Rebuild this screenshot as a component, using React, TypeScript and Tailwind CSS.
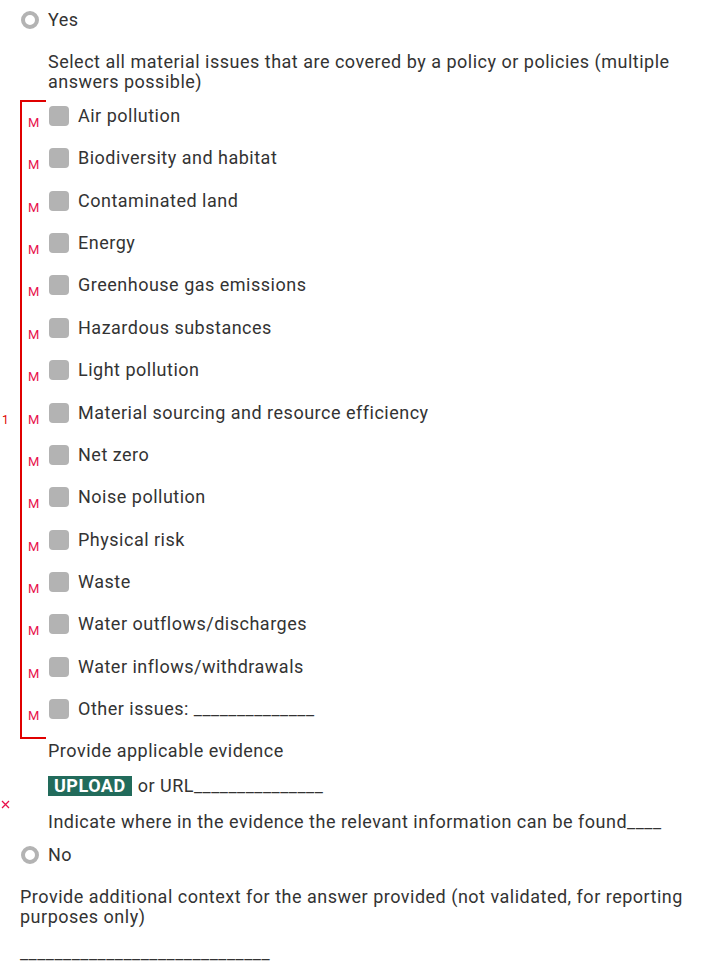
import React from "react";

const ISSUES = [
  "Air pollution",
  "Biodiversity and habitat",
  "Contaminated land",
  "Energy",
  "Greenhouse gas emissions",
  "Hazardous substances",
  "Light pollution",
  "Material sourcing and resource efficiency",
  "Net zero",
  "Noise pollution",
  "Physical risk",
  "Waste",
  "Water outflows/discharges",
  "Water inflows/withdrawals",
  "Other issues: ______________",
];

function Radio({ label }: { label: string }) {
  return (
    <div className="flex h-[20px] items-center pl-[21px]">
      <span className="h-[18px] w-[18px] rounded-full border-[4px] border-[#b3b3b3] bg-white" />
      <span className="ml-[9px] leading-[20px]">{label}</span>
    </div>
  );
}

function IssueRow({ label }: { label: string }) {
  return (
    <div className="flex h-[42.36px] items-start">
      <span className="w-[27px] pl-[6px] pt-[13px] text-[13px] leading-[16px] tracking-normal text-[#e8104a]">M</span>
      <div className="flex h-[28px] items-center">
        <span className="h-[20px] w-[20px] rounded-[4px] bg-[#b3b3b3]" />
        <span className="ml-[9px] leading-[20px]">{label}</span>
      </div>
    </div>
  );
}

export default function App() {
  return (
    <div className="min-h-[969px] w-[706px] bg-white font-['Roboto',sans-serif] text-[18px] tracking-[0.5px] text-[#333]">
      <div className="pt-[10px]">
        <Radio label="Yes" />
      </div>

      <p className="mt-[22px] w-[690px] pl-[48px] leading-[20px]">
        Select all material issues that are covered by a policy or policies (multiple answers possible)
      </p>

      <div className="mt-[8px] flex">
        <div className="flex w-[20px] items-center pl-[2px] text-[12px] text-[#e00000]">1</div>
        <div className="flex flex-col border-l-2 border-[#e00000]">
          <div className="h-[2px] w-[24px] bg-[#e00000]" />
          {ISSUES.map((issue) => (
            <IssueRow key={issue} label={issue} />
          ))}
          <div className="h-[2px] w-[24px] bg-[#e00000]" />
        </div>
      </div>

      <p className="mt-[2px] pl-[48px] leading-[20px]">Provide applicable evidence</p>

      <div className="mt-[15px] flex h-[20px] items-center pl-[48px] leading-[20px]">
        <span className="bg-[#226b5b] px-[6px] font-bold leading-[20px] text-white">UPLOAD</span>
        <span className="ml-[6px]">or URL_______________</span>
      </div>

      <div className="flex h-[16px] items-center pl-[1px]">
        <svg width="9" height="9" viewBox="0 0 9 9" className="text-[#e8104a]">
          <path d="M1 1 L8 8 M8 1 L1 8" stroke="currentColor" strokeWidth="1.3" />
        </svg>
      </div>

      <p className="pl-[48px] leading-[20px]">Indicate where in the evidence the relevant information can be found____</p>

      <div className="mt-[13px]">
        <Radio label="No" />
      </div>

      <p className="mt-[22px] w-[700px] pl-[20px] leading-[20px]">
        Provide additional context for the answer provided (not validated, for reporting purposes only)
      </p>

      <p className="mt-[16px] pl-[20px] leading-[20px]">_____________________________</p>
    </div>
  );
}
